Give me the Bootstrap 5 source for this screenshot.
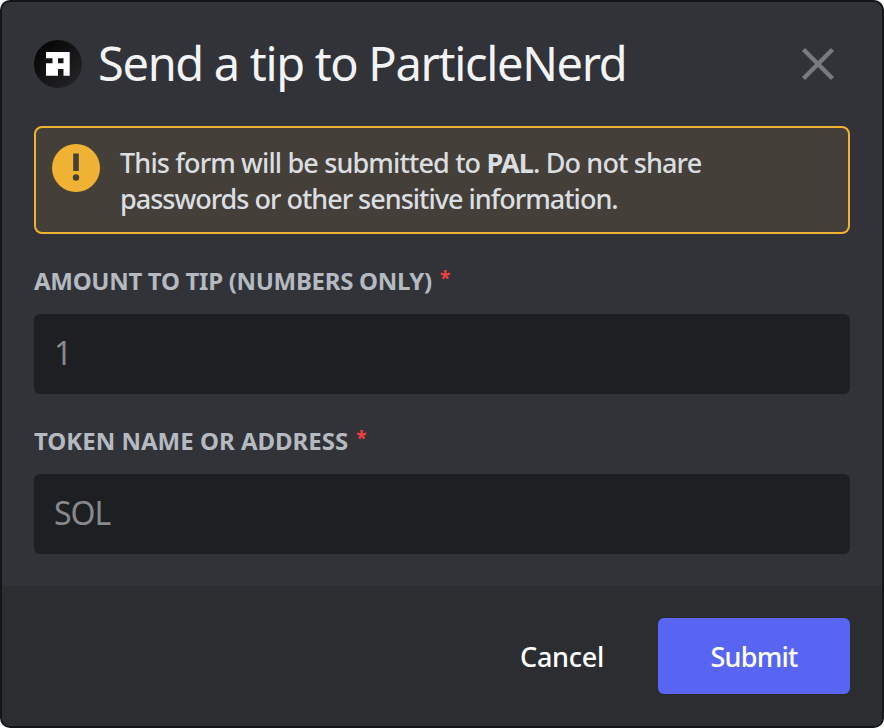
<!DOCTYPE html>
<html lang="en">
<head>
<meta charset="utf-8">
<meta name="viewport" content="width=device-width, initial-scale=1">
<title>Send a tip to ParticleNerd</title>
<link href="https://cdn.jsdelivr.net/npm/bootstrap@5.3.0/dist/css/bootstrap.min.css" rel="stylesheet">
<style>
body { background: #fff; font-family: "Noto Sans", "Open Sans", sans-serif; }
.tip-dialog { width: 884px; height: 728px; background: #313338; border: 2px solid #141519; border-radius: 10px; }
.tip-head { height: 124px; padding: 0 46px 0 32px; }
.tip-title { font-size: 47px; line-height: 60px; font-weight: 400; color: #f2f3f5; margin-left: 16px; padding-bottom: 3px; letter-spacing: -1.33px; white-space: nowrap; }
.tip-body { padding: 0 32px; }
.tip-warning { height: 108px; border: 2px solid #f0b232; border-radius: 8px; background: #444039; color: #dbdee1; padding: 16px; font-size: 27px; line-height: 36px; font-weight: 500; gap: 20px; }
.tip-warning p { white-space: nowrap; padding-top: 1px; }
.line-one { letter-spacing: -.86px; }
.line-two { letter-spacing: -1px; }
.tip-field { margin-top: 32px; }
.tip-label { font-size: 24px; line-height: 30px; padding-bottom: 2px; margin-bottom: 16px; font-weight: 700; color: #b5bac1; white-space: nowrap; }
.amount-text { letter-spacing: -.3px; }
.tip-required { color: #f23f42; font-size: 19px; line-height: 1; margin-left: 8px; padding-bottom: 6px; }
.tip-input, .tip-input:focus { height: 80px; border: 0; border-radius: 6px; background: #1e1f22; color: #dbdee1; padding: 0 20px 4px; font-size: 32px; letter-spacing: -1px; box-shadow: none; }
.tip-input::placeholder { color: #87898c; opacity: 1; }
.tip-foot { background: #2b2d31; border-radius: 0 0 8px 8px; height: 140px; padding: 0 32px; }
.tip-btn, .tip-btn:hover { height: 76px; border: 0; border-radius: 6px; color: #fff; font-size: 27px; font-weight: 500; padding: 2px 0 0; }
.tip-cancel { width: 192px; letter-spacing: -.3px; }
.tip-submit, .tip-submit:hover { width: 192px; background: #5865f2; letter-spacing: -.8px; }
</style>
</head>
<body>
<main class="tip-dialog d-flex flex-column">
  <header class="tip-head d-flex align-items-center flex-shrink-0">
    <svg width="48" height="48" viewBox="0 0 48 48" aria-hidden="true">
      <defs><linearGradient id="logoShade" x1="0" y1="0" x2="1" y2="1"><stop offset="0" stop-color="#000"/><stop offset="1" stop-color="#27282b"/></linearGradient></defs>
      <circle cx="24" cy="24" r="24" fill="url(#logoShade)"/>
      <path fill="#fff" fill-rule="evenodd" d="M12 12h23.700v23.700h-6.200v-6.700h-5.500v6.700H12V23.300h6.500v-5h-6.500zM24 18.300v5h5.500v-5z"/>
    </svg>
    <h1 class="tip-title mb-0">Send a tip to ParticleNerd</h1>
    <button type="button" class="btn p-0 border-0 ms-auto d-flex" aria-label="Close">
      <svg width="36" height="36" viewBox="0 0 36 36"><path d="M3.500 3.500l29 29M32.500 3.500l-29 29" stroke="#777a80" stroke-width="4.400"/></svg>
    </button>
  </header>
  <div class="tip-body flex-grow-1">
    <div class="tip-warning d-flex align-items-start">
      <svg class="flex-shrink-0" width="48" height="48" viewBox="0 0 48 48" aria-hidden="true"><circle cx="24" cy="24" r="24" fill="#f0b232"/><path fill="#444039" d="M21.200 9.500h5.600v17.500h-5.600z"/><circle cx="24" cy="33.500" r="3.200" fill="#444039"/></svg>
      <p class="mb-0"><span class="line-one">This form will be submitted to <strong>PAL</strong>. Do not share</span><br><span class="line-two">passwords or other sensitive information.</span></p>
    </div>
    <div class="tip-field">
      <label class="tip-label d-flex align-items-center" for="amount"><span class="amount-text">AMOUNT TO TIP (NUMBERS ONLY)</span><span class="tip-required">*</span></label>
      <input id="amount" class="tip-input form-control" placeholder="1">
    </div>
    <div class="tip-field">
      <label class="tip-label d-flex align-items-center" for="token"><span>TOKEN NAME OR ADDRESS</span><span class="tip-required">*</span></label>
      <input id="token" class="tip-input form-control" placeholder="SOL">
    </div>
  </div>
  <footer class="tip-foot d-flex align-items-center justify-content-end flex-shrink-0">
    <button type="button" class="btn tip-btn tip-cancel">Cancel</button>
    <button type="submit" class="btn tip-btn tip-submit">Submit</button>
  </footer>
</main>
<script src="https://cdn.jsdelivr.net/npm/bootstrap@5.3.0/dist/js/bootstrap.bundle.min.js"></script>
</body>
</html>
